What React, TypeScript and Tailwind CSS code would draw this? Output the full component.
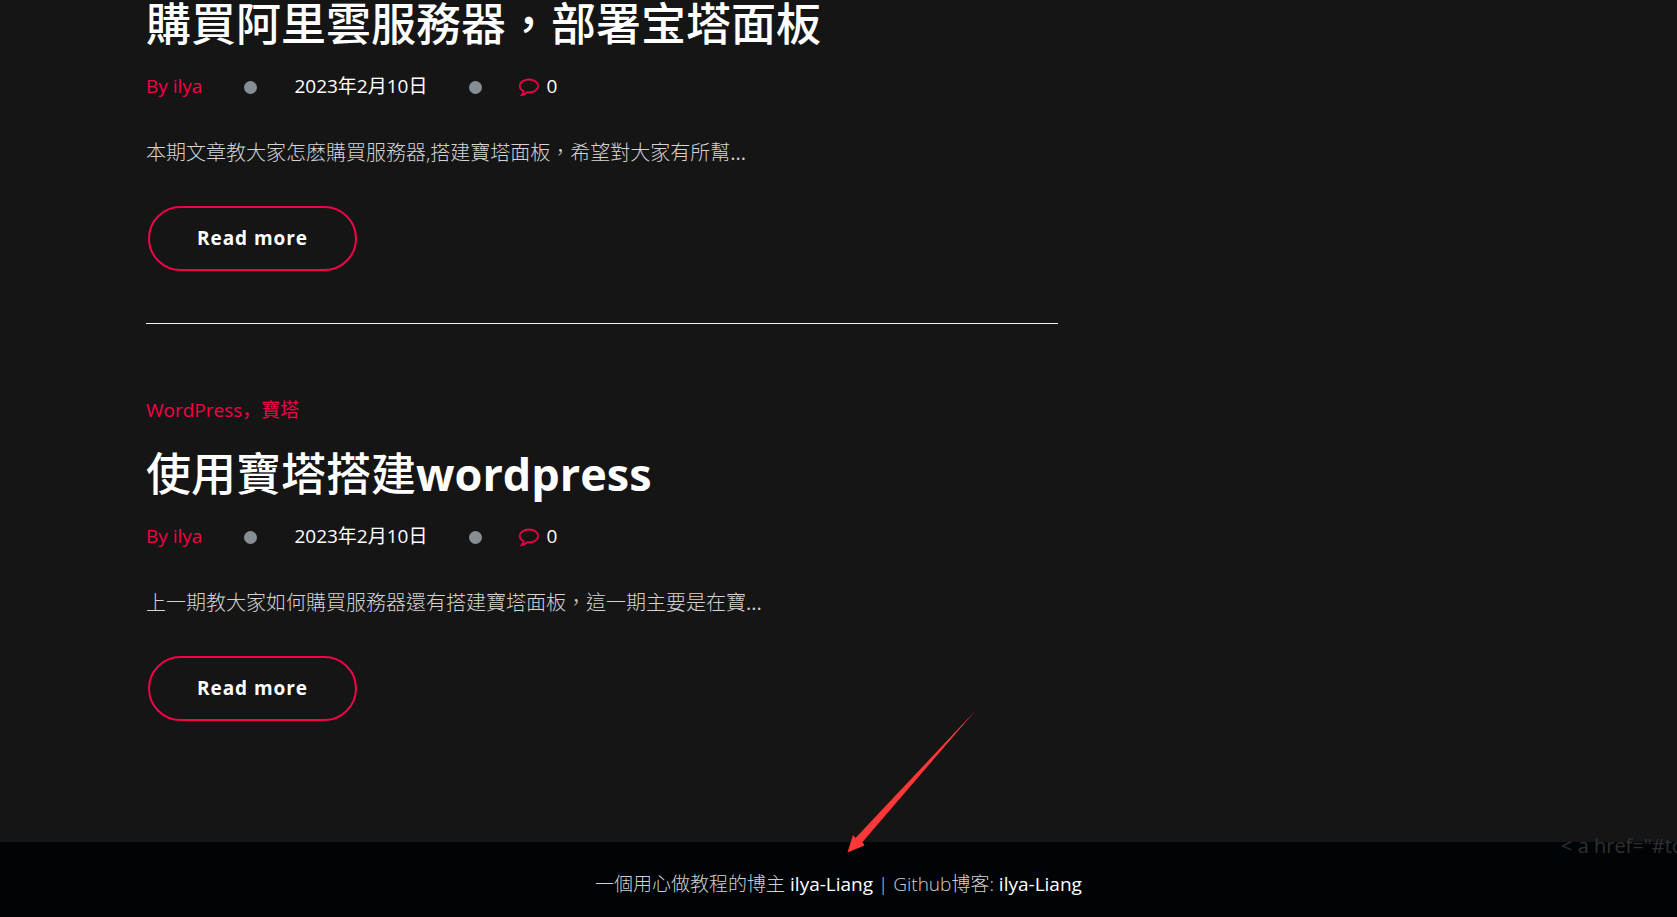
type Category = { label: string; href: string };

type Post = {
  title: string;
  titleLatin?: string;
  categories: Category[];
  author: string;
  date: string;
  comments: number;
  excerpt: string;
};

const posts: Post[] = [
  {
    title: "購買阿里雲服務器，部署宝塔面板",
    categories: [],
    author: "ilya",
    date: "2023年2月10日",
    comments: 0,
    excerpt: "本期文章教大家怎麽購買服務器,搭建寶塔面板，希望對大家有所幫",
  },
  {
    title: "使用寶塔搭建",
    titleLatin: "wordpress",
    categories: [
      { label: "WordPress", href: "#wordpress" },
      { label: "寶塔", href: "#baota" },
    ],
    author: "ilya",
    date: "2023年2月10日",
    comments: 0,
    excerpt: "上一期教大家如何購買服務器還有搭建寶塔面板，這一期主要是在寶",
  },
];

function CommentIcon() {
  return (
    <svg viewBox="0 0 1792 1792" className="size-5 fill-[#f50049] stroke-[#f50049] stroke-[40]" aria-hidden="true">
      <path d="M896 384q-204 0-381.5 69.5t-282 187.5-104.5 255q0 112 71.5 213.5t201.5 175.5l87 50-27 96q-24 91-70 172 152-63 275-171l43-38 57 6q69 8 130 8 204 0 381.5-69.5t282-187.5 104.5-255-104.5-255-282-187.5-381.5-69.5zm896 512q0 174-120 321.5t-326 233-450 85.5q-70 0-145-8-198 175-460 242-49 14-114 22h-5q-15 0-27-10.5t-16-27.5v-1q-3-4-.5-12t2-10 4.5-9.5l6-9 7-8.5 8-9q7-8 31-34.5t34.5-38 31-39.5 32.5-51 27-59 26-76q-157-89-247.5-220t-90.5-281q0-174 120-321.5t326-233 450-85.5 450 85.5 326 233 120 321.5z" />
    </svg>
  );
}

function Dot() {
  return (
    <span className="flex w-[92px] items-center justify-center pt-[2px] pl-[5px]" aria-hidden="true">
      <span className="size-[13px] rounded-full bg-[#868e96]" />
    </span>
  );
}

function PostCard({ post }: { post: Post }) {
  return (
    <article>
      {post.categories.length > 0 && (
        <p className="mb-[26px] text-[19px] leading-7 text-[#f50049]">
          {post.categories.map((category, i) => (
            <span key={category.label}>
              {i > 0 && <span className="font-['Open_Sans','Noto_Sans_CJK_SC',sans-serif]">，</span>}
              <a href={category.href}>{category.label}</a>
            </span>
          ))}
        </p>
      )}
      <h2 className="text-[45px] leading-[48px] font-medium text-white">
        {post.title}
        {post.titleLatin && <span className="font-bold">{post.titleLatin}</span>}
      </h2>
      <div className="mt-6 flex items-center text-[19px] leading-7 text-white">
        <a href="#author" className="text-[#f50049]">By {post.author}</a>
        <Dot />
        <time dateTime="2023-02-10">{post.date}</time>
        <Dot />
        <a href="#comments" className="flex items-center gap-[7px]">
          <CommentIcon />
          {post.comments}
        </a>
      </div>
      <p className="mt-[37px] text-xl leading-8 font-light text-[#d4d4d4]">
        {post.excerpt}
        <span className="font-normal">...</span>
      </p>
      <a
        href="#read"
        className="mt-[37px] ml-[2px] inline-flex h-[65px] items-center rounded-full border-2 border-[#f50049] px-[47px] text-[19px] font-bold tracking-wider text-white"
      >
        Read more
      </a>
    </article>
  );
}

export default function App() {
  return (
    <div className="relative flex min-h-screen flex-col overflow-hidden bg-[#151515] font-['Open_Sans','Noto_Sans_CJK_TC',sans-serif]">
      <main className="mx-auto w-full max-w-[1385px] flex-1">
        <div className="w-full max-w-[912px]">
          <PostCard post={posts[0]} />
          <hr className="mt-[52px] mb-[72px] border-t border-[#f1f1f1]" />
          <PostCard post={posts[1]} />
        </div>
      </main>
      <footer className="bg-[#000407] pt-7 pb-[19px] text-center text-[19px] leading-7 font-light text-[#d0d0d0]">
        一個用心做教程的博主{" "}
        <a href="#author" className="font-normal text-white">ilya-Liang</a>
        {" | Github博客: "}
        <a href="#github" className="font-normal text-white">ilya-Liang</a>
      </footer>
      <div className="absolute right-0 bottom-[57px] w-[116px] overflow-hidden text-xl leading-7 whitespace-nowrap text-[#303030]">
        {'< a href="#top"'}
      </div>
      <svg viewBox="0 0 130 144" className="absolute bottom-16 left-1/2 ml-2 h-36 w-[130px] fill-[#ff3737]" aria-hidden="true">
        <path d="M129 1 L15.500 133 L17.500 136.500 L0.500 143.500 L6 126 L8.500 129 Z" />
      </svg>
    </div>
  );
}
